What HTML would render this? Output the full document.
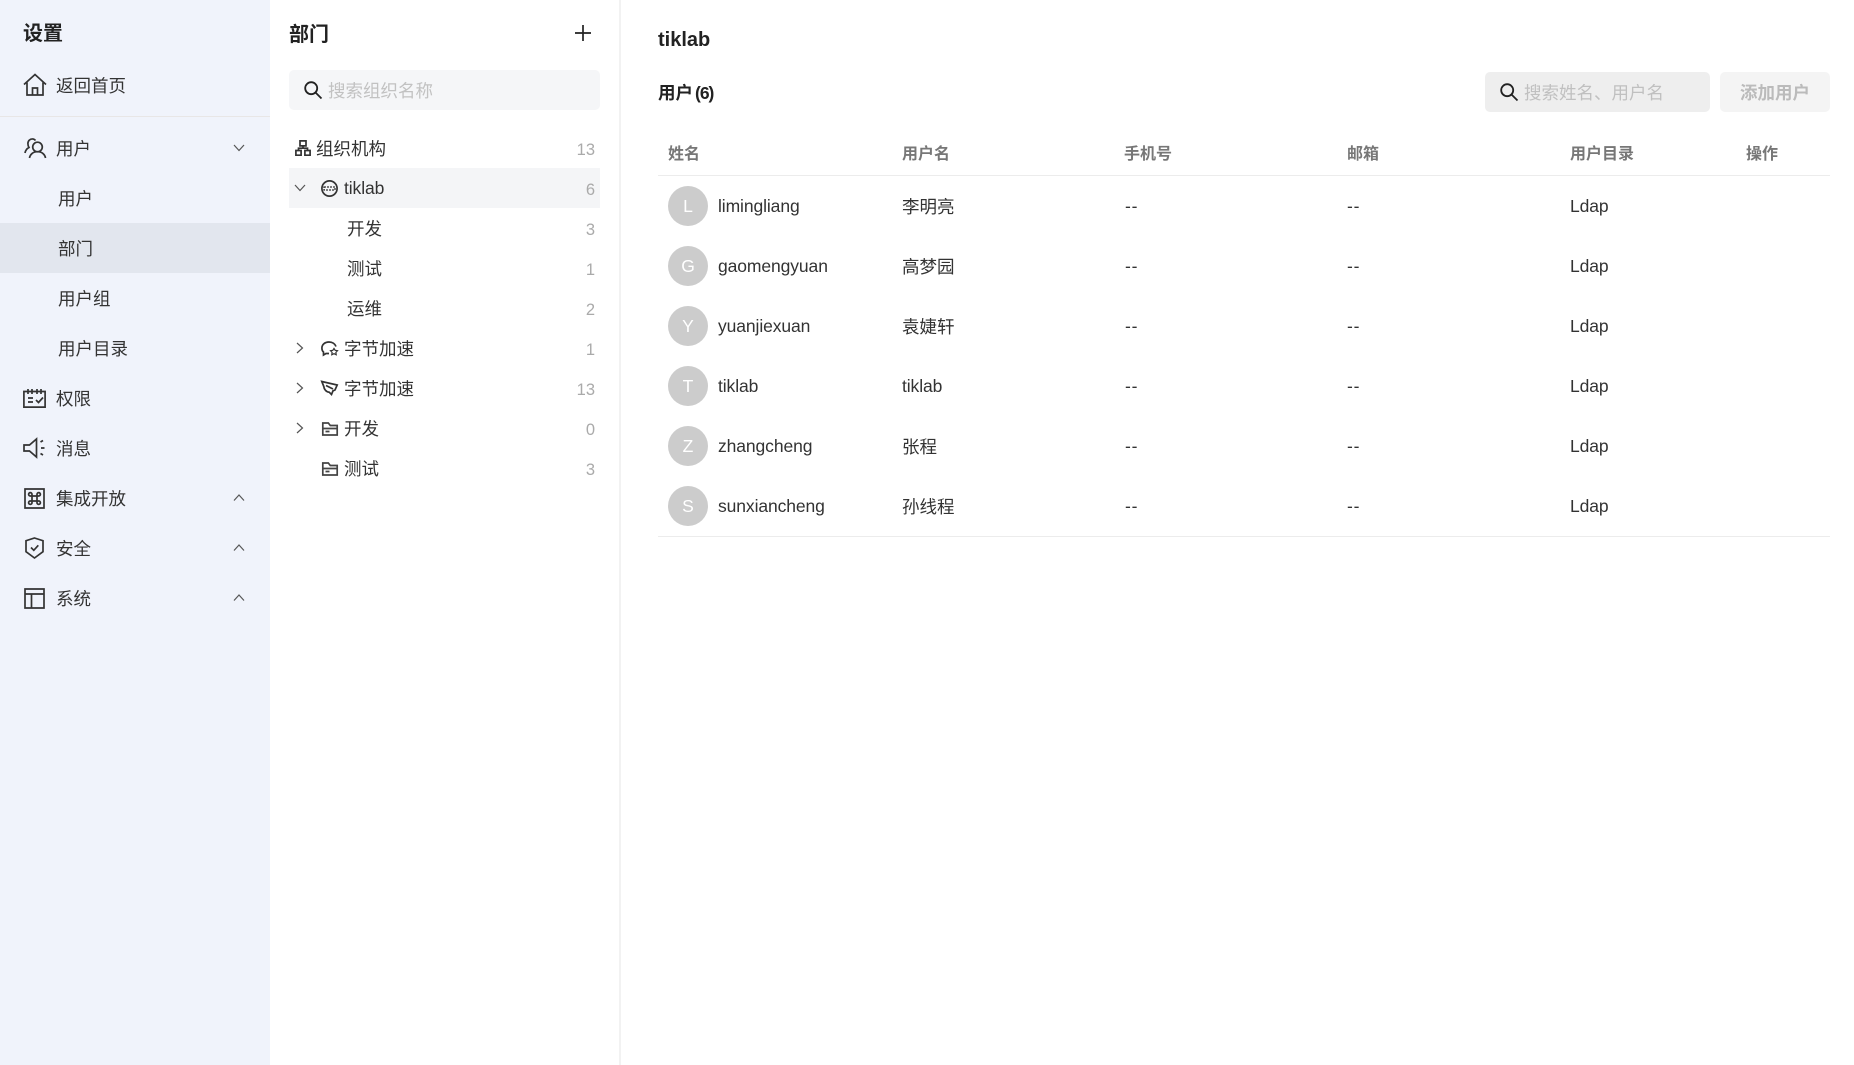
<!DOCTYPE html>
<html lang="zh">
<head>
<meta charset="utf-8">
<title>部门</title>
<style>
html,body{margin:0;padding:0;background:#fff}
body{width:1854px;height:1065px;position:relative;overflow:hidden;font-family:"Liberation Sans","Noto Sans CJK SC",sans-serif;font-size:17.5px;color:#333}
.a{position:absolute;white-space:nowrap;line-height:24px;margin-top:1px}
.b{font-weight:700;color:#222}
svg{position:absolute;overflow:visible;fill:none;stroke:#333;stroke-width:1.7}
.box{position:absolute}
.c{color:#aaa;right:1259px;font-size:16.5px}
.h{font-weight:700;color:#777;font-size:16px}
.av{position:absolute;left:668px;width:40px;height:40px;border-radius:50%;background:#ccc;color:#fff;text-align:center;line-height:40px;font-size:17.5px}
.n{letter-spacing:-.1px;margin-top:0}
.d{letter-spacing:.8px;margin-top:0}
.ln{position:absolute;background:#ececec;height:1px;left:658px;width:1172px}
</style>
</head>
<body>
<div class="box" style="left:0;top:0;width:270px;height:1065px;background:#f0f3fb"></div>
<div class="box" style="left:0;top:116px;width:270px;height:1px;background:#e8e6e6"></div>
<div class="box" style="left:0;top:223px;width:270px;height:50px;background:#e2e6ee"></div>
<div class="a b" style="left:23px;top:21px;font-size:20px">设置</div>

<svg style="left:23px;top:73px" width="24" height="24" viewBox="0 0 24 24"><path d="M1 11.500 12 1.500l11 10M4 9.500V22h16V9.500M9.500 22v-7h5v7M4 22h16"/></svg>
<div class="a" style="left:56px;top:73px">返回首页</div>

<svg style="left:24px;top:137px" width="22" height="22" viewBox="0 0 22 22"><path d="M1 16c.5-3 2-4.500 4-5.500C3.500 8 3.500 4.800 5.200 3.200 7 1.500 10 1.500 11.500 3.500"/><circle cx="13.500" cy="10" r="4.800"/><path d="M5.500 21c.5-3.500 3.500-6.300 8-6.300s7.500 2.800 8 6.300"/></svg>
<div class="a" style="left:56px;top:136px">用户</div>
<svg style="left:234px;top:145px;stroke:#555;stroke-width:1.200" width="10" height="6" viewBox="0 0 10 6"><path d="M0 0l5 5.500L10 0"/></svg>

<div class="a" style="left:58px;top:186px">用户</div>
<div class="a" style="left:58px;top:236px">部门</div>
<div class="a" style="left:58px;top:286px">用户组</div>
<div class="a" style="left:58px;top:336px">用户目录</div>

<svg style="left:23px;top:389px" width="23" height="19" viewBox="0 0 23 19"><path d="M.9 2.500h21.200v15.600H.9zM5 0v5M9 0v5M14 0v5M18 0v5M5 9h5M5 13h5M13 11l2.500 2.500L20 8.500"/></svg>
<div class="a" style="left:56px;top:386px">权限</div>

<svg style="left:23px;top:438px" width="23" height="20" viewBox="0 0 23 20"><path d="M1 7h5.500L13.500 1v18L6.500 13H1zM17.500 4l2.500-1.500M18 10h3.500M17.500 15.500l2.500 1.500"/></svg>
<div class="a" style="left:56px;top:436px">消息</div>

<svg style="left:24px;top:488px" width="21" height="21" viewBox="0 0 21 21"><path d="M1 1h19v19H1zM8 8h5v5H8zM8 8H6.300A1.700 1.700 0 1 1 8 6.300zM13 8V6.300A1.700 1.700 0 1 1 14.700 8zM13 13h1.700a1.700 1.700 0 1 1-1.700 1.700zM8 13v1.700A1.700 1.700 0 1 1 6.300 13z"/></svg>
<div class="a" style="left:56px;top:486px">集成开放</div>
<svg style="left:234px;top:495px;stroke:#555;stroke-width:1.200" width="10" height="6" viewBox="0 0 10 6"><path d="M0 5.500L5 0l5 5.500"/></svg>

<svg style="left:25px;top:537px" width="19" height="22" viewBox="0 0 19 22"><path d="M9.500 1L18 3.700v11L9.500 21 1 14.700v-11zM6 10.500l2.800 2.800 4.500-5"/></svg>
<div class="a" style="left:56px;top:536px">安全</div>
<svg style="left:234px;top:545px;stroke:#555;stroke-width:1.200" width="10" height="6" viewBox="0 0 10 6"><path d="M0 5.500L5 0l5 5.500"/></svg>

<svg style="left:24px;top:588px" width="21" height="21" viewBox="0 0 21 21"><path d="M1 1h19v19H1zM1 6h19M7.500 6v14"/></svg>
<div class="a" style="left:56px;top:586px">系统</div>
<svg style="left:234px;top:595px;stroke:#555;stroke-width:1.200" width="10" height="6" viewBox="0 0 10 6"><path d="M0 5.500L5 0l5 5.500"/></svg>

<!-- dept panel -->
<div class="box" style="left:619px;top:0;width:2px;height:1065px;background:#f2f2f2"></div>
<div class="a b" style="left:289px;top:22px;font-size:20px">部门</div>
<svg style="left:575px;top:25px;stroke:#222;stroke-width:1.700" width="16" height="16" viewBox="0 0 16 16"><path d="M0 8h16M8 0v16"/></svg>
<div class="box" style="left:289px;top:70px;width:311px;height:40px;background:#f5f6f8;border-radius:5px"></div>
<svg style="left:304px;top:81px;stroke:#222;stroke-width:1.800" width="18" height="18" viewBox="0 0 18 18"><circle cx="7.200" cy="7.200" r="6"/><path d="M11.500 11.500L17.500 17.500"/></svg>
<div class="a" style="left:328px;top:78px;color:#c2c2c2">搜索组织名称</div>

<svg style="left:295px;top:140px" width="16" height="16" viewBox="0 0 16 16"><path d="M5 .9h6v5H5zM.9 10.500h5.200v4.700H.9zM9.900 10.500h5.200v4.700H9.900zM8 6v2.200M3.500 10.500V8.200h9v2.300"/></svg>
<div class="a" style="left:316px;top:136px">组织机构</div>
<div class="a c" style="top:137px">13</div>

<div class="box" style="left:289px;top:168px;width:311px;height:40px;background:#f4f5f7"></div>
<svg style="left:295px;top:185px;stroke:#555;stroke-width:1.200" width="10" height="6" viewBox="0 0 10 6"><path d="M0 0l5 5.500L10 0"/></svg>
<svg style="left:321px;top:180px" width="17" height="17" viewBox="0 0 17 17"><circle cx="8.500" cy="8.500" r="7.600"/><path d="M3 7h11v3H3z" stroke="#333" stroke-width="1.300" stroke-dasharray="2 1"/></svg>
<div class="a n" style="left:344px;top:176px">tiklab</div>
<div class="a c" style="top:177px">6</div>

<div class="a" style="left:347px;top:216px">开发</div>
<div class="a c" style="top:217px">3</div>
<div class="a" style="left:347px;top:256px">测试</div>
<div class="a c" style="top:257px">1</div>
<div class="a" style="left:347px;top:296px">运维</div>
<div class="a c" style="top:297px">2</div>

<svg style="left:297px;top:343px;stroke:#555;stroke-width:1.200" width="6" height="10" viewBox="0 0 6 10"><path d="M0 0l5.500 5L0 10"/></svg>
<svg style="left:321px;top:341px" width="18" height="16" viewBox="0 0 18 16"><path d="M8 12.500H5L2.500 14V11C1.200 10 .9 8.500.9 7 .9 3.500 4 1 8 1c3.300 0 6 1.700 7 4.500"/><path d="M13 7.500l1.200 1.800 2.300.4-1.600 1.700.3 2.300-2.200-1-2.200 1 .3-2.300-1.600-1.700 2.300-.4z" stroke-width="1.200"/></svg>
<div class="a" style="left:344px;top:336px">字节加速</div>
<div class="a c" style="top:337px">1</div>

<svg style="left:297px;top:383px;stroke:#555;stroke-width:1.200" width="6" height="10" viewBox="0 0 6 10"><path d="M0 0l5.500 5L0 10"/></svg>
<svg style="left:321px;top:380px" width="17" height="17" viewBox="0 0 17 17"><path d="M.8 1.500L16.200 5 14 10l-2 .8-1.500 3.700-2.300-2.300C5 12 3 9 2.800 6.500zM5 5.500l7 3.500"/></svg>
<div class="a" style="left:344px;top:376px">字节加速</div>
<div class="a c" style="top:377px">13</div>

<svg style="left:297px;top:423px;stroke:#555;stroke-width:1.200" width="6" height="10" viewBox="0 0 6 10"><path d="M0 0l5.500 5L0 10"/></svg>
<svg style="left:322px;top:422px;stroke:#444" width="16" height="14" viewBox="0 0 16 14"><path d="M.8 13V1h5.500l2 2.500h6.900V13zM.8 6.500h14.400M3.500 9.500h4"/></svg>
<div class="a" style="left:344px;top:416px">开发</div>
<div class="a c" style="top:417px">0</div>

<svg style="left:322px;top:462px;stroke:#444" width="16" height="14" viewBox="0 0 16 14"><path d="M.8 13V1h5.500l2 2.500h6.900V13zM.8 6.500h14.400M3.500 9.500h4"/></svg>
<div class="a" style="left:344px;top:456px">测试</div>
<div class="a c" style="top:457px">3</div>

<!-- main -->
<div class="a b" style="left:658px;top:27px;font-size:20px">tiklab</div>
<div class="a b" style="left:658px;top:80px">用户<span style="margin-left:2px;letter-spacing:-1px">(6)</span></div>
<div class="box" style="left:1485px;top:72px;width:225px;height:40px;background:#eee;border-radius:5px"></div>
<svg style="left:1500px;top:83px;stroke:#222;stroke-width:1.800" width="18" height="18" viewBox="0 0 18 18"><circle cx="7.200" cy="7.200" r="6"/><path d="M11.500 11.500L17.500 17.500"/></svg>
<div class="a" style="left:1524px;top:80px;color:#c0c0c0">搜索姓名、用户名</div>
<div class="box" style="left:1720px;top:72px;width:110px;height:40px;background:#f4f4f4;border-radius:5px"></div>
<div class="a" style="left:1740px;top:80px;color:#bbb;font-weight:700">添加用户</div>

<div class="a h" style="left:668px;top:142px">姓名</div>
<div class="a h" style="left:902px;top:142px">用户名</div>
<div class="a h" style="left:1124px;top:142px">手机号</div>
<div class="a h" style="left:1347px;top:142px">邮箱</div>
<div class="a h" style="left:1570px;top:142px">用户目录</div>
<div class="a h" style="left:1746px;top:142px">操作</div>
<div class="ln" style="top:175px"></div>

<div class="av" style="top:186px">L</div><div class="a n" style="left:718px;top:194px">limingliang</div><div class="a" style="left:902px;top:194px">李明亮</div><div class="a d" style="left:1125px;top:194px">--</div><div class="a d" style="left:1347px;top:194px">--</div><div class="a n" style="left:1570px;top:194px">Ldap</div>
<div class="av" style="top:246px">G</div><div class="a n" style="left:718px;top:254px">gaomengyuan</div><div class="a" style="left:902px;top:254px">高梦园</div><div class="a d" style="left:1125px;top:254px">--</div><div class="a d" style="left:1347px;top:254px">--</div><div class="a n" style="left:1570px;top:254px">Ldap</div>
<div class="av" style="top:306px">Y</div><div class="a n" style="left:718px;top:314px">yuanjiexuan</div><div class="a" style="left:902px;top:314px">袁婕轩</div><div class="a d" style="left:1125px;top:314px">--</div><div class="a d" style="left:1347px;top:314px">--</div><div class="a n" style="left:1570px;top:314px">Ldap</div>
<div class="av" style="top:366px">T</div><div class="a n" style="left:718px;top:374px">tiklab</div><div class="a n" style="left:902px;top:374px">tiklab</div><div class="a d" style="left:1125px;top:374px">--</div><div class="a d" style="left:1347px;top:374px">--</div><div class="a n" style="left:1570px;top:374px">Ldap</div>
<div class="av" style="top:426px">Z</div><div class="a n" style="left:718px;top:434px">zhangcheng</div><div class="a" style="left:902px;top:434px">张程</div><div class="a d" style="left:1125px;top:434px">--</div><div class="a d" style="left:1347px;top:434px">--</div><div class="a n" style="left:1570px;top:434px">Ldap</div>
<div class="av" style="top:486px">S</div><div class="a n" style="left:718px;top:494px">sunxiancheng</div><div class="a" style="left:902px;top:494px">孙线程</div><div class="a d" style="left:1125px;top:494px">--</div><div class="a d" style="left:1347px;top:494px">--</div><div class="a n" style="left:1570px;top:494px">Ldap</div>
<div class="ln" style="top:536px"></div>
</body>
</html>
